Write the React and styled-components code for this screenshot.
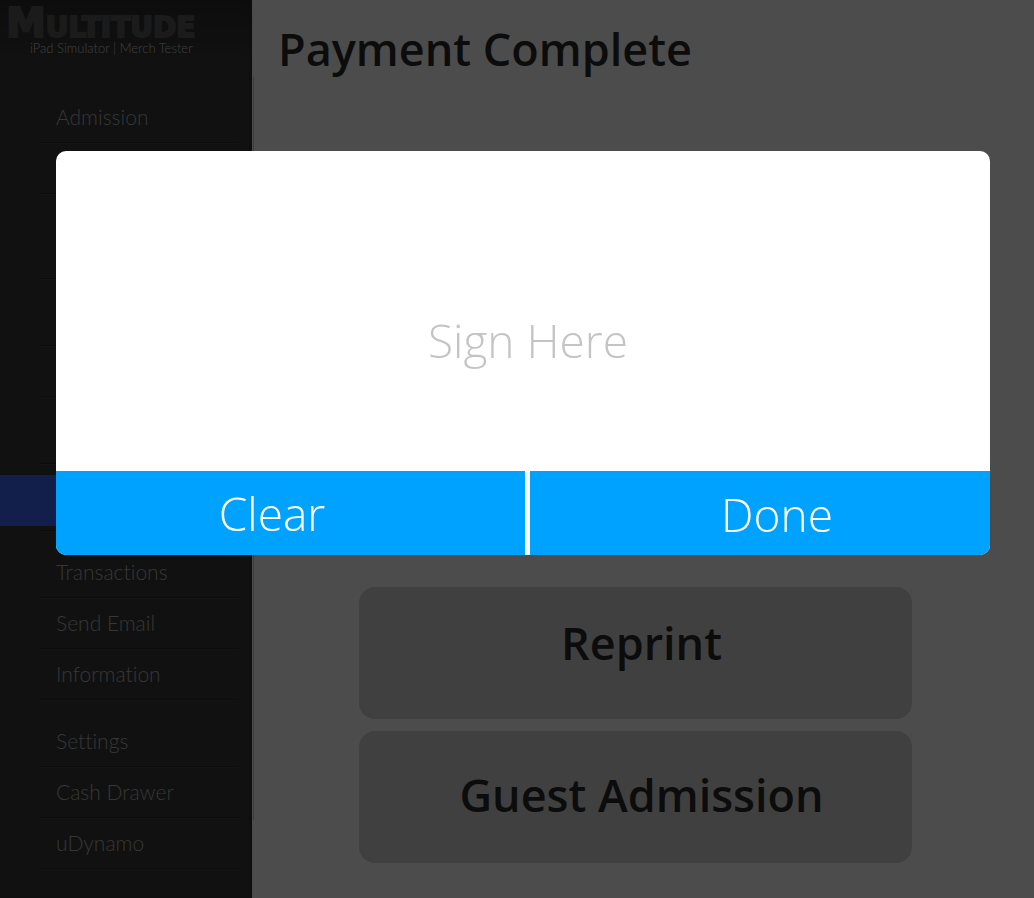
import React from "react";
import styled, { createGlobalStyle } from "styled-components";

const GlobalStyle = createGlobalStyle`
  *, *::before, *::after { box-sizing: border-box; }
  body {
    margin: 0;
    background: #fff;
    font-family: "Open Sans", "Noto Sans", sans-serif;
  }
`;

const Page = styled.div`
  display: flex;
  min-height: 100vh;
`;

const Sidebar = styled.aside`
  flex: 0 0 252px;
  padding: 0 13px 27px 0;
  background: linear-gradient(#2b2b2b, #3a3a3a 60px);
  box-shadow: inset -3px 0 3px -1px #2c2c2c;
  font-family: Lato, sans-serif;
  font-variant-ligatures: none;
`;

const Brand = styled.header`
  display: flex;
  flex-direction: column;
  height: 93px;
  padding: 5px 0 0 6px;
`;

const Logo = styled.div`
  color: #5d5d5d;
  font-family: "DejaVu Sans", sans-serif;
  font-size: 40px;
  font-weight: 700;
  font-variant: small-caps;
  line-height: 36px;
  white-space: nowrap;
  -webkit-text-stroke: 2px #5d5d5d;
`;

const Tagline = styled.div`
  padding-left: 24px;
  color: #d0d0d0;
  font-size: 13px;
  font-weight: 300;
  line-height: 14px;
  white-space: nowrap;
`;

const Menu = styled.ul`
  margin: 0;
  padding: 0 0 0 39px;
  list-style: none;
`;

const MenuItem = styled.li`
  height: ${(p) => p.$height || 51}px;
  margin-top: ${(p) => p.$gap || 0}px;
  border-bottom: 1px solid #444;
  box-shadow: inset 0 -1px 0 #2b2b2b;
`;

const MenuLink = styled.a`
  display: block;
  padding-left: 17px;
  color: #b4b4b4;
  font-size: 21px;
  font-weight: 300;
  line-height: 48px;
  text-decoration: none;
`;

const ActiveBar = styled.div`
  height: 51px;
  margin: 0 -13px 0 -39px;
  background: #4068fa;
`;

const Divider = styled.div`
  width: 2px;
  height: 743px;
  margin-top: 77px;
  border-left: 1px solid #fff;
  background: #ccc;
`;

const Main = styled.main`
  display: flex;
  flex: 1;
  flex-direction: column;
  padding: 17px 122px 35px 24px;
`;

const Title = styled.h1`
  margin: 0;
  color: #2b2b2b;
  font-size: 45px;
  font-weight: 600;
  line-height: 64px;
  white-space: nowrap;
`;

const Actions = styled.div`
  display: flex;
  flex-direction: column;
  gap: 12px;
  margin: 506px 0 0 81px;
`;

const ActionButton = styled.button`
  height: 132px;
  padding: 0 0 ${(p) => p.$lift || 0}px 12px;
  border: 0;
  border-radius: 16px;
  background: #d5d5d5;
  color: #2b2b2b;
  font: 600 45px/64px "Open Sans", "Noto Sans", sans-serif;
`;

const Overlay = styled.div`
  position: fixed;
  inset: 0;
  padding: 151px 44px 0 56px;
  background: rgba(0, 0, 0, 0.7);
`;

const Dialog = styled.section`
  overflow: hidden;
  border-radius: 10px;
  background: #fff;
`;

const SignArea = styled.div`
  display: flex;
  align-items: center;
  justify-content: center;
  height: 320px;
  padding: 58px 0 0 10px;
  color: #c4c4c4;
  font-size: 46px;
  font-weight: 300;
`;

const DialogActions = styled.div`
  display: grid;
  grid-template-columns: 469fr 460fr;
  gap: 5px;
`;

const DialogButton = styled.button`
  height: 84px;
  padding: ${(p) => p.$padding};
  border: 0;
  background: #00a2ff;
  color: #fff;
  font: 300 46px/64px "Open Sans", "Noto Sans", sans-serif;
`;

function Entry({ label, gap }) {
  return (
    <MenuItem $gap={gap}>
      {label && <MenuLink href="#">{label}</MenuLink>}
    </MenuItem>
  );
}

export default function App() {
  return (
    <>
      <GlobalStyle />
      <Page>
        <Sidebar>
          <Brand>
            <Logo>Multitude</Logo>
            <Tagline>iPad Simulator | Merch Tester</Tagline>
          </Brand>
          <Menu>
            <Entry label="Admission" />
            <Entry />
            <Entry gap={34} />
            <Entry gap={16} />
            <Entry />
            <Entry gap={16} />
            <MenuItem $gap={10} $height={57}>
              <ActiveBar />
            </MenuItem>
            <Entry gap={16} label="Transactions" />
            <Entry label="Send Email" />
            <Entry label="Information" />
            <Entry gap={16} label="Settings" />
            <Entry label="Cash Drawer" />
            <Entry label="uDynamo" />
          </Menu>
        </Sidebar>
        <Divider />
        <Main>
          <Title>Payment Complete</Title>
          <Actions>
            <ActionButton $lift={20}>Reprint</ActionButton>
            <ActionButton $lift={4}>Guest Admission</ActionButton>
          </Actions>
        </Main>
      </Page>
      <Overlay>
        <Dialog role="dialog" aria-label="Signature">
          <SignArea>Sign Here</SignArea>
          <DialogActions>
            <DialogButton $padding="0 37px 0 0">Clear</DialogButton>
            <DialogButton $padding="2px 0 0 34px">Done</DialogButton>
          </DialogActions>
        </Dialog>
      </Overlay>
    </>
  );
}
